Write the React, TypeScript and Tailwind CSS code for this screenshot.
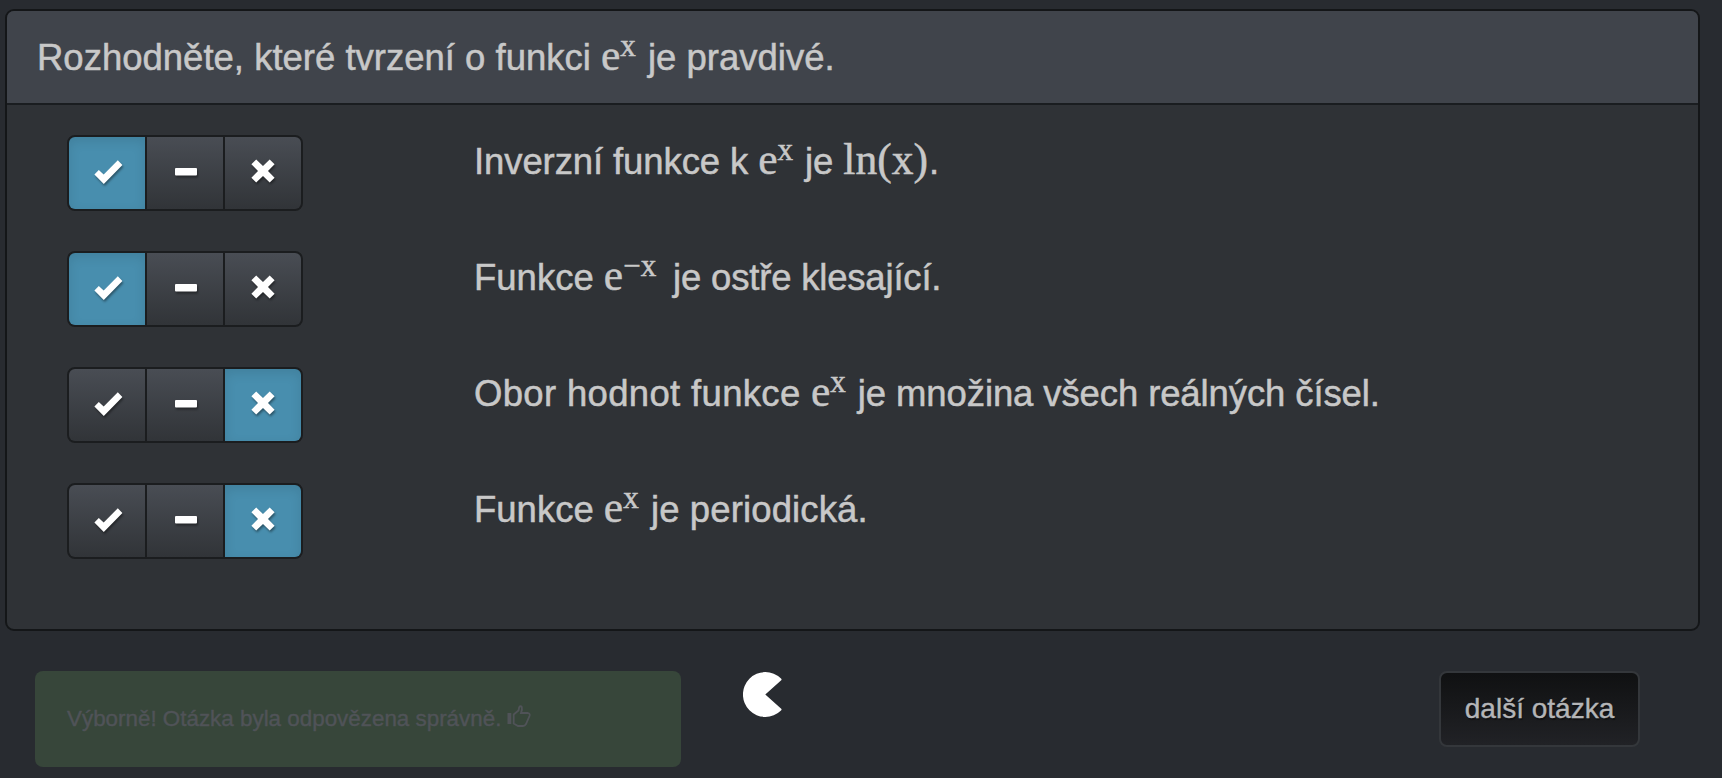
import type { ReactNode } from "react";

type Choice = "yes" | "none" | "no";

function CheckIcon() {
  return (
    <svg width="29" height="24" viewBox="0 0 29 24" fill="#fff" className="mb-[2px] ml-[3px] drop-shadow-[1px_2px_1px_rgba(0,0,0,0.4)]">
      <path d="M0.4 14.4 L4.8 10 L9.7 14.6 L23.8 0.3 L28.4 5 L9.8 23.9 Z" />
    </svg>
  );
}

function MinusIcon() {
  return (
    <svg width="22" height="8" viewBox="0 0 22 8" fill="#fff" className="mb-[2px] ml-[2px] drop-shadow-[1px_2px_1px_rgba(0,0,0,0.4)]">
      <rect width="22" height="7.6" rx="1" />
    </svg>
  );
}

function CrossIcon() {
  return (
    <svg width="24" height="24" viewBox="0 0 24 24" fill="#fff" className="mb-[4px] drop-shadow-[1px_2px_1px_rgba(0,0,0,0.4)]">
      <path d="M5.2 0.4 L12 7 L18.7 0.4 L23.6 5.3 L17 12 L23.6 18.7 L18.7 23.5 L12 16.9 L5.2 23.5 L0.4 18.7 L7 12 L0.4 5.3 Z" />
    </svg>
  );
}

function ChoiceButton({ active, children }: { active: boolean; children: ReactNode }) {
  return (
    <button
      className={
        active
          ? "flex items-center justify-center bg-[#488eae] shadow-[inset_0_4px_12px_rgba(0,0,0,0.1)]"
          : "flex items-center justify-center bg-linear-to-b from-[#494d54] to-[#313438]"
      }
    >
      {children}
    </button>
  );
}

function ChoiceGroup({ value }: { value: Choice }) {
  return (
    <div className="grid h-[76px] w-[236px] grid-cols-3 gap-[2px] overflow-hidden rounded-lg border-2 border-[#1b1d1f] bg-[#1b1d1f]">
      <ChoiceButton active={value === "yes"}>
        <CheckIcon />
      </ChoiceButton>
      <ChoiceButton active={value === "none"}>
        <MinusIcon />
      </ChoiceButton>
      <ChoiceButton active={value === "no"}>
        <CrossIcon />
      </ChoiceButton>
    </div>
  );
}

function Serif({ children }: { children: ReactNode }) {
  return <span className="font-['Liberation_Serif',serif] text-[43.5px] leading-none tracking-normal">{children}</span>;
}

function Exp({ power }: { power: string }) {
  return (
    <Serif>
      e<span className="mr-[2px] inline-block translate-y-[-14.5px] text-[31px] leading-none">{power}</span>
    </Serif>
  );
}

const rows: { value: Choice; text: ReactNode }[] = [
  {
    value: "yes",
    text: (
      <>
        <span className="tracking-[-0.1px]">Inverzní funkce k </span>
        <Exp power="x" />
        <span className="tracking-[-0.1px]"> je </span>
        <span className="mr-[1px]">
          <Serif>ln(x)</Serif>
        </span>
        .
      </>
    ),
  },
  {
    value: "yes",
    text: (
      <>
        Funkce <Exp power="−x" />
        <span className="ml-[5px] tracking-[-0.19px]"> je ostře klesající.</span>
      </>
    ),
  },
  {
    value: "no",
    text: (
      <>
        <span className="tracking-[0.33px]">Obor hodnot funkce </span>
        <Exp power="x" />
        <span className="tracking-[-0.11px]"> je množina všech reálných čísel.</span>
      </>
    ),
  },
  {
    value: "no",
    text: (
      <>
        Funkce <Exp power="x" />
        <span className="tracking-[0.13px]"> je periodická.</span>
      </>
    ),
  },
];

export default function App() {
  return (
    <div className="h-[778px] w-[1722px] overflow-hidden bg-[#282b30] pt-[9px] pl-[5px] font-['Liberation_Sans',Arial,sans-serif] text-[#c8c8c8]">
      <section className="h-[622px] w-[1695px] overflow-hidden rounded-[9px] border-2 border-[#141618] bg-[#2f3236]">
        <header className="flex h-[94px] items-center whitespace-pre border-b-2 border-[#1a1d20] bg-[#40444b] pt-[2px] pl-[30px] text-[36.5px] leading-[50px]">
          <h1 className="h-[50px] [-webkit-text-stroke:0.5px_#c8c8c8]">
            Rozhodněte, které tvrzení o funkci <Exp power="x" /> je pravdivé.
          </h1>
        </header>
        <div className="flex flex-col gap-10 pt-[30px] pl-[60px]">
          {rows.map((row, i) => (
            <div key={i} className="flex h-[76px] items-start">
              <ChoiceGroup value={row.value} />
              <p className="mt-[2px] ml-[171px] h-[50px] whitespace-pre text-[36.5px] leading-[50px] [-webkit-text-stroke:0.5px_#c8c8c8]">{row.text}</p>
            </div>
          ))}
        </div>
      </section>
      <footer className="flex items-start pt-10 pl-[30px]">
        <div className="flex h-24 w-[646px] items-center rounded-lg bg-[#37463a] pl-8 text-[22.4px] text-[#505358]">
          <span className="[-webkit-text-stroke:0.4px_#505358]">Výborně! Otázka byla odpovězena správně.</span>
          <svg width="24" height="23" viewBox="0 0 24 23" fill="none" stroke="#505358" strokeWidth="1.8" className="mb-[5px] ml-[6px]">
            <path d="M0.5 8 H4.3 V19 H0.5 Z" fill="#505358" stroke="none" />
            <path d="M6.7 9.5 L11.5 5.5 L12.2 2.2 Q13.5 0.4 14.8 2 Q15.5 4 14 8 H21 Q23.4 8.6 22.5 11 L19 19 Q18 21 16 21 H11 L6.7 18.5 Z" />
          </svg>
        </div>
        <svg width="40" height="46" viewBox="0 0 40 46" fill="#fff" className="mt-[1px] ml-[62px]">
          <path d="M22.3 22.5 L38.2 8.3 Q39 7.5 38 6.5 A22.4 22.4 0 1 0 38 38.5 Q39 37.5 38.2 36.7 Z" />
        </svg>
        <button className="ml-[656px] h-[76px] w-[201px] rounded-lg border-2 border-[#34373b] bg-linear-to-b from-[#101112] to-[#212226] text-[28px] text-[#b4b5b7] [-webkit-text-stroke:0.4px_#b4b5b7] [text-shadow:1px_2px_1px_rgba(0,0,0,0.4)]">
          další otázka
        </button>
      </footer>
    </div>
  );
}
